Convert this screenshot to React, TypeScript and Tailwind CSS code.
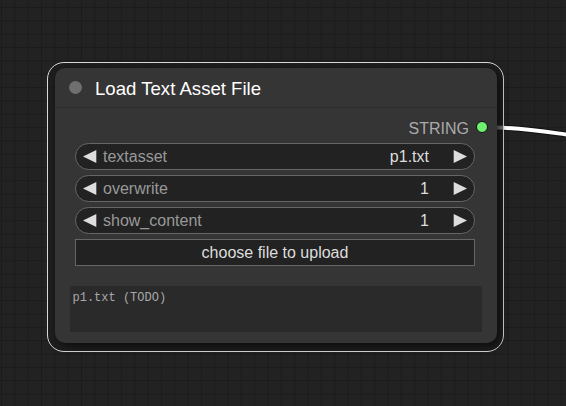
const font = "font-['Liberation_Sans',Arial,sans-serif]";

function Arrow({ dir }: { dir: "left" | "right" }) {
  return (
    <svg width="14" height="13" viewBox="0 0 14 13" className="shrink-0">
      {dir === "left" ? (
        <polygon points="13.3,0 0,6.5 13.3,13" fill="#dddddd" />
      ) : (
        <polygon points="0.7,0 14,6.5 0.7,13" fill="#dddddd" />
      )}
    </svg>
  );
}

function NumberWidget({ label, value }: { label: string; value: string }) {
  return (
    <div className="flex h-[26.7px] w-[400px] items-center rounded-full border border-[#666] bg-[#222] pl-[7px] pr-[7px] text-[16px] leading-none">
      <Arrow dir="left" />
      <span className="ml-[6px] pt-[2px] text-[#999]">{label}</span>
      <span className="ml-auto mr-[24px] pt-[2px] text-[#ddd]">{value}</span>
      <Arrow dir="right" />
    </div>
  );
}

export default function App() {
  return (
    <div
      className={`relative h-[406px] w-[566px] overflow-hidden bg-[#222] bg-[linear-gradient(to_right,#1b1b1b_1px,transparent_1px),linear-gradient(to_bottom,#1b1b1b_1px,transparent_1px)] bg-[size:13.333px_13.333px] bg-[position:1px_7px] ${font}`}
    >
      {/* link leaving the STRING output */}
      <svg className="absolute left-0 top-0" width="566" height="406">
        <path d="M497 127.5 C 525 128.5, 540 131, 570 135" stroke="rgba(0,0,0,0.5)" strokeWidth="6" fill="none" />
        <path d="M497 127.5 C 525 128.5, 540 131, 570 135" stroke="#ffffff" strokeWidth="4" fill="none" />
      </svg>

      {/* selection outline */}
      <div className="absolute left-[47px] top-[61.5px] h-[290.5px] w-[456.5px] rounded-[17px] border-[1.5px] border-[#d8d8d8] bg-[#1c1c1c]/60" />

      {/* node */}
      <div className="absolute left-[55px] top-[68px] flex h-[275px] w-[442px] flex-col rounded-[10px] bg-[#353535] shadow-[3px_3px_8px_rgba(0,0,0,0.6)]">
        <div className="flex h-[40px] shrink-0 items-center border-b border-[#2c2c2c] pl-[13.5px]">
          <div className="h-[13px] w-[13px] rounded-full bg-[#6f6f6f]" />
          <span className="ml-[13.5px] pt-[3px] text-[18.6px] leading-none text-white">Load Text Asset File</span>
        </div>

        <div className="flex h-[35px] shrink-0 items-center justify-end pt-[3px] pr-[9px]">
          <span className="pt-[3px] text-[16px] leading-none text-[#aaa]">STRING</span>
          <div className="ml-[7px] h-[12px] w-[12px] rounded-full border border-[#111] bg-[#70f070]" />
        </div>

        <div className="flex flex-col gap-[5.3px] pl-[20px]">
          <NumberWidget label="textasset" value="p1.txt" />
          <NumberWidget label="overwrite" value="1" />
          <NumberWidget label="show_content" value="1" />
          <div className="flex h-[26.7px] w-[400px] items-center justify-center border border-[#666] bg-[#222] pt-[2px] text-[16px] leading-none text-[#ddd]">
            choose file to upload
          </div>
        </div>

        <div className="ml-[15px] mt-[20.3px] h-[45.7px] w-[412px] bg-[#2a2a2a] px-[2.5px] pt-[6px] font-['Liberation_Mono',monospace] text-[12px] leading-none text-[#a8a8a8]">
          p1.txt (TODO)
        </div>
      </div>
    </div>
  );
}
